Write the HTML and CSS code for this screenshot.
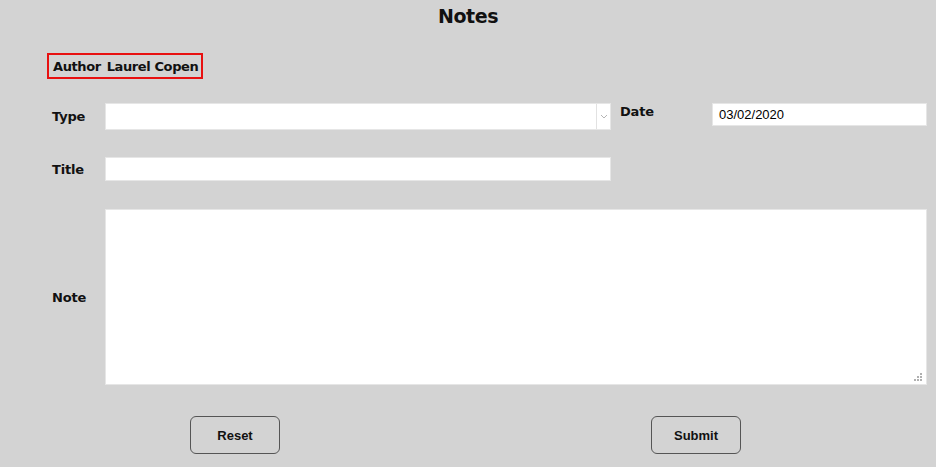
FILE: index.html
```html
<!DOCTYPE html>
<html>
<head>
<meta charset="utf-8">
<link rel="stylesheet" href="styles.css">
</head>
<body>
<div class="page">
  <h1 class="heading">Notes</h1>
  <div class="author-row">
    <div class="author-box"><span>Author</span><span>Laurel Copen</span></div>
  </div>
  <div class="form">
    <div class="label">Type</div>
    <div class="select"><div class="select-value"></div><div class="select-arrow"><svg width="8" height="5" viewBox="0 0 8 5"><path d="M1 1 L4 4 L7 1" fill="none" stroke="#b5b5b5" stroke-width="1"/></svg></div></div>
    <div></div>
    <div class="label label-top">Date</div>
    <div class="date-input">03/02/2020</div>

    <div class="label">Title</div>
    <div class="text-input"></div>
    <div></div><div></div><div></div>

    <div class="label">Note</div>
    <div class="textarea">
      <svg class="grip" width="8" height="8" viewBox="0 0 8 8">
        <rect x="6" y="0" width="2" height="2" fill="#b0b0b0"/>
        <rect x="3" y="3" width="2" height="2" fill="#b0b0b0"/>
        <rect x="6" y="3" width="2" height="2" fill="#b0b0b0"/>
        <rect x="0" y="6" width="2" height="2" fill="#b0b0b0"/>
        <rect x="3" y="6" width="2" height="2" fill="#b0b0b0"/>
        <rect x="6" y="6" width="2" height="2" fill="#b0b0b0"/>
      </svg>
    </div>
  </div>
  <div class="buttons">
    <button class="btn">Reset</button>
    <button class="btn btn-submit">Submit</button>
  </div>
</div>
</body>
</html>
```
FILE: styles.css
```css
html, body {
  margin: 0;
  padding: 0;
  background: #d3d3d3;
}
body {
  width: 936px;
  height: 467px;
  overflow: hidden;
  font-family: "DejaVu Sans", sans-serif;
  color: #111;
}
.page {
  display: flex;
  flex-direction: column;
}
.heading {
  margin: 0;
  height: 32px;
  line-height: 32px;
  text-align: center;
  font-size: 19px;
  font-weight: bold;
  letter-spacing: -0.4px;
}
.author-row {
  display: flex;
  padding-left: 47px;
  margin-top: 21px;
}
.author-box {
  display: flex;
  gap: 6px;
  height: 22px;
  align-items: center;
  padding: 0 3px 0 4px;
  border: 2px solid #e81010;
  font-size: 13px;
  font-weight: bold;
  letter-spacing: -0.4px;
}
.form {
  display: grid;
  margin-top: 24px;
  padding-left: 52px;
  grid-template-columns: 53px 506px 9px 92px 215px;
  grid-template-rows: 27px 25px 176px;
  row-gap: 27px;
}
.label {
  font-size: 13px;
  font-weight: bold;
  letter-spacing: -0.2px;
  align-self: center;
}
.label-top {
  align-self: start;
  padding-top: 1px;
}
.select {
  display: flex;
  background: #fff;
  border: 1px solid #e6e6e6;
  box-sizing: border-box;
}
.select-value {
  flex: 1;
}
.select-arrow {
  width: 13px;
  border-left: 1px solid #e2e2e2;
  display: flex;
  align-items: center;
  justify-content: center;
}
.date-input {
  height: 23px;
  box-sizing: border-box;
  background: #fff;
  border: 1px solid #e6e6e6;
  font-family: "Liberation Sans", Arial, sans-serif;
  font-size: 13px;
  padding: 3px 0 0 6px;
  color: #000;
}
.text-input {
  height: 24px;
  align-self: start;
  background: #fff;
  border: 1px solid #e6e6e6;
  box-sizing: border-box;
}
.textarea {
  grid-column: 2 / 6;
  background: #fff;
  border: 1px solid #e6e6e6;
  box-sizing: border-box;
  position: relative;
}
.grip {
  position: absolute;
  right: 4px;
  bottom: 3px;
}
.buttons {
  display: flex;
  padding-left: 190px;
  gap: 371px;
  margin-top: 31px;
}
.btn {
  width: 90px;
  height: 38px;
  background: #d3d3d3;
  border: 1px solid #555;
  border-radius: 6px;
  font-family: "Liberation Sans", Arial, sans-serif;
  font-size: 13px;
  font-weight: bold;
  color: #111;
  padding: 0;
}
```
